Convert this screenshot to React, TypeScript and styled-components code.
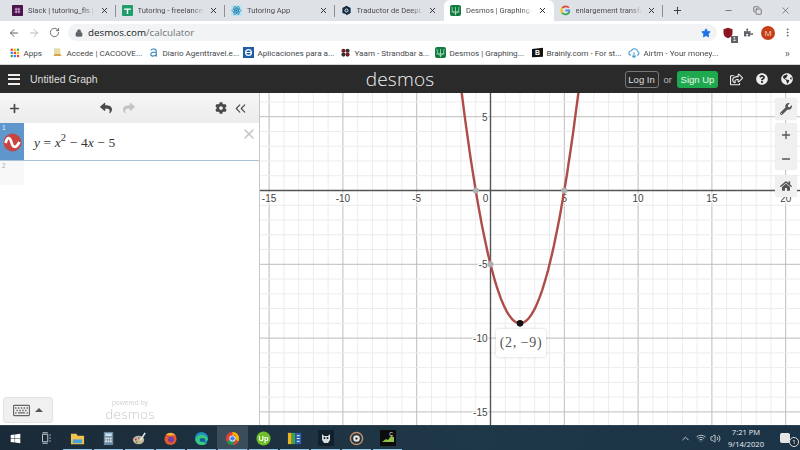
import React from "react";
import styled, { createGlobalStyle } from "styled-components";
import { ArrowLeft, ArrowRight, RotateCw, Lock, Star, MoreVertical, X, Plus, Minus, Square, Copy, ChevronUp, ChevronsLeft, Volume2, Wifi } from "lucide-react";
import { FaCog, FaGlobeAmericas, FaHome, FaPuzzlePiece, FaQuestionCircle, FaRegShareSquare, FaReply, FaShare, FaWindows, FaWrench, FaRegKeyboard } from "react-icons/fa";

const Global = createGlobalStyle`
  html, body { margin: 0; padding: 0; width: 800px; height: 450px; overflow: hidden; background: #fff; }
  #root { width: 800px; height: 450px; }
  * { box-sizing: border-box; }
`;

const Page = styled.div`
  width: 800px; height: 450px; display: flex; flex-direction: column; overflow: hidden;
  font-family: "Open Sans", "Liberation Sans", sans-serif; filter: blur(0.35px);
`;
const TabStrip = styled.div`
  height: 21px; background: #dee1e6; display: flex; align-items: stretch; padding-left: 6px; flex: none;
`;
const Tab = styled.div<{ $active?: boolean; $sep?: boolean }>`
  width: 109.5px; flex: none; display: flex; align-items: center; padding: 0 5px 0 6px; gap: 5px; position: relative;
  background: ${p => (p.$active ? "#ffffff" : "transparent")};
  border-radius: ${p => (p.$active ? "6px 6px 0 0" : "0")};
  &::after {
    content: ""; position: absolute; right: 0; top: 5px; bottom: 4px; width: 1px;
    background: ${p => (p.$sep ? "#8b8e93" : "transparent")};
  }
`;
const TabLabel = styled.span`
  flex: 1; min-width: 0; overflow: hidden; white-space: nowrap; font-family: Roboto, sans-serif; font-size: 7.6px; color: #4a4c50; line-height: 21px;
  -webkit-mask-image: linear-gradient(to right, #000 82%, transparent 100%);
  mask-image: linear-gradient(to right, #000 82%, transparent 100%);
`;
const TabClose = styled.span`
  display: flex; color: #333; margin-right: 2px; flex: none;
`;
const NewTab = styled.div`
  width: 28px; display: flex; align-items: center; justify-content: center; color: #3c4043; flex: none;
`;
const WindowControls = styled.div`
  margin-left: auto; display: flex; align-items: center; color: #555;
`;
const WindowBtn = styled.div`
  width: 28.5px; display: flex; justify-content: center;
`;
const Toolbar = styled.div`
  height: 20px; background: #fff; display: flex; align-items: center; flex: none; padding-left: 4px; padding-top: 3px;
`;
const NavBtn = styled.div<{ $dim?: boolean }>`
  width: 20px; display: flex; justify-content: center; color: ${p => (p.$dim ? "#b8babd" : "#5f6368")};
`;
const Omnibox = styled.div`
  margin-left: 4px; width: 649px; height: 17px; border-radius: 9px; background: #f1f3f4; display: flex; align-items: center; padding: 0 6px 0 7px;
`;
const Url = styled.span`
  margin-left: 5px; font-size: 9.8px; color: #202124; flex: 1; white-space: nowrap;
  & > em { font-style: normal; color: #70757a; }
`;
const ExtSlot = styled.div<{ $w: number }>`
  width: ${p => p.$w}px; display: flex; justify-content: center; align-items: center; flex: none; position: relative; color: #5f6368;
`;
const ExtBadge = styled.span`
  position: absolute; right: 1px; bottom: -4px; width: 7px; height: 7px; background: #5f6368; color: #fff; font-size: 6px; line-height: 7px; text-align: center; font-family: "Liberation Sans", sans-serif;
`;
const Avatar = styled.span`
  width: 14px; height: 14px; border-radius: 50%; background: #c5401a; color: #f6d9cc; font-size: 8px; line-height: 14px; text-align: center;
`;
const Bookmarks = styled.div`
  height: 24px; background: #fff; display: flex; align-items: center; padding-left: 10px; flex: none; border-bottom: 1px solid #d5d6d8;
`;
const Bookmark = styled.div<{ $w: number }>`
  width: ${p => p.$w}px; flex: none; display: flex; align-items: center; gap: 3.5px; font-family: Roboto, sans-serif; font-size: 8.1px; color: #45474a; white-space: nowrap;
`;
const MoreBookmarks = styled.span`
  margin-left: 14px; color: #666; font-size: 10px;
`;
const Header = styled.header`
  height: 28px; background: #2a2a2a; color: #e6e6e6; display: flex; align-items: center; flex: none; position: relative; padding-left: 8px;
`;
const Burger = styled.div`
  width: 12px; height: 11px; display: flex; flex-direction: column; justify-content: space-between;
  & > i { display: block; height: 2px; background: #eee; }
`;
const Title = styled.span`
  margin-left: 10px; font-family: "Liberation Sans", sans-serif; font-size: 10.5px; color: #ddd;
`;
const Logo = styled.span`
  position: absolute; left: 0; right: 0; text-align: center; font-family: "Open Sans", sans-serif; font-weight: 300; font-size: 19px; letter-spacing: 0.2px; color: #f2f2f2; line-height: 28px;
`;
const HeaderRight = styled.div`
  margin-left: auto; display: flex; align-items: center; font-family: "Liberation Sans", sans-serif; font-size: 9.5px; position: relative; padding-right: 7px;
`;
const LoginBtn = styled.span`
  width: 34px; height: 17px; border: 1px solid #777; border-radius: 3px; text-align: center; line-height: 15px; color: #ddd;
`;
const OrText = styled.span`
  margin: 0 5px; color: #bbb;
`;
const SignUp = styled.span`
  width: 41px; height: 17px; background: #1fa94f; border-radius: 3px; text-align: center; line-height: 17px; color: #e9f7ec;
`;
const HeadIcon = styled.span<{ $ml: number }>`
  margin-left: ${p => p.$ml}px; display: flex; color: #eee;
`;
const Main = styled.main`
  flex: 1; min-height: 0; display: flex;
`;
const Panel = styled.aside`
  width: 260px; flex: none; display: flex; flex-direction: column; border-right: 1px solid #c7c7c7; background: #fff; box-shadow: 1px 0 2px rgba(0,0,0,.05);
`;
const PanelTools = styled.div`
  height: 30px; background: linear-gradient(#f6f6f6, #ececec); display: flex; align-items: center; flex: none; color: #444; padding-left: 8px;
`;
const ToolBtn = styled.span<{ $ml?: number; $dim?: boolean }>`
  display: flex; margin-left: ${p => p.$ml ?? 0}px; color: ${p => (p.$dim ? "#c4c4c4" : "#4a4a4a")};
`;
const ExprRow = styled.div`
  height: 38px; display: flex; flex: none; border-bottom: 1px solid #a9c3da; position: relative; background: #fff;
`;
const ExprCell = styled.div`
  width: 24px; background: #5f97cd; position: relative; display: flex; align-items: center; justify-content: center; padding-top: 2px;
`;
const RowNum = styled.span<{ $c: string }>`
  position: absolute; left: 2px; top: 1px; font-size: 6.5px; color: ${p => p.$c}; font-family: "Liberation Sans", sans-serif;
`;
const Formula = styled.div`
  margin-left: 10px; align-self: center; font-family: "Liberation Serif", serif; font-size: 13.5px; color: #333; white-space: nowrap; padding-top: 3px; letter-spacing: .1px;
  & > i { font-style: italic; }
  & > sup { font-size: 10.5px; line-height: 0; vertical-align: 6px; }
`;
const ExprClose = styled.span`
  position: absolute; right: 2px; top: 3px; display: flex; color: #c5c5c5;
`;
const EmptyRow = styled.div`
  height: 24px; display: flex; flex: none;
`;
const EmptyCell = styled.div`
  width: 24px; background: #f8f8f8; position: relative;
`;
const PanelFill = styled.div`
  flex: 1;
`;
const PanelFoot = styled.div`
  height: 28px; display: flex; align-items: center; padding: 0 0 2px 3px; flex: none; position: relative;
`;
const KeyboardBtn = styled.div`
  width: 50px; height: 26px; background: #f0f0f0; border: 1px solid #e2e2e2; border-radius: 3px; display: flex; align-items: center; padding-left: 9px; gap: 5px; color: #666;
`;
const Caret = styled.span`
  width: 0; height: 0; border: 4px solid transparent; border-top: 0; border-bottom: 4px solid #555;
`;
const Powered = styled.div`
  margin-left: 52px; width: 50px; display: flex; flex-direction: column; align-items: center; color: #d2d2d2;
`;
const PoweredBy = styled.span`
  font-size: 7px; line-height: 8px; font-family: "Liberation Sans", sans-serif;
`;
const PoweredLogo = styled.span`
  font-size: 13.5px; line-height: 14px; font-weight: 300; letter-spacing: .3px; color: #c8c8c8;
`;
const Graph = styled.section`
  flex: 1; min-width: 0; position: relative; background: #fff; overflow: hidden;
`;
const PointLabel = styled.div`
  position: absolute; left: 236px; top: 236px; width: 50px; height: 28px; background: #fff; border-radius: 3px; box-shadow: 0 0 3px rgba(0,0,0,.2);
  font-family: "Liberation Serif", serif; font-size: 14px; color: #555; display: flex; align-items: center; justify-content: center; letter-spacing: .6px;
`;
const GraphTools = styled.div`
  position: absolute; right: 3px; top: 5px; display: flex; flex-direction: column; width: 22px;
`;
const GraphBtn = styled.div<{ $h: number; $mb?: number }>`
  height: ${p => p.$h}px; margin-bottom: ${p => p.$mb ?? 0}px; background: #f0f0f0; border-radius: 3px; display: flex; align-items: center; justify-content: center; color: #555; box-shadow: 0 0 1px rgba(0,0,0,.15);
`;
const Stack = styled.div`
  display: flex; flex-direction: column; gap: 12px; align-items: center;
`;
const Taskbar = styled.footer`
  height: 25px; flex: none; background: linear-gradient(90deg, #1b2a38, #1f3848 60%, #1b3346); display: flex; align-items: stretch; color: #fff; border-top: 1px solid #2d4150;
`;
const TaskCell = styled.div<{ $active?: boolean; $run?: boolean }>`
  width: 31px; flex: none; display: flex; align-items: center; justify-content: center; position: relative;
  background: ${p => (p.$active ? "#3b4d5a" : "transparent")};
  &::after {
    content: ""; position: absolute; left: 1px; right: 1px; bottom: 0; height: 1.5px;
    background: ${p => (p.$run ? "#8fc4ea" : "transparent")};
  }
`;
const Tray = styled.div`
  margin-left: auto; display: flex; align-items: center; color: #cfd6db;
`;
const TraySlot = styled.span<{ $w: number }>`
  width: ${p => p.$w}px; display: flex; justify-content: center; position: relative;
`;
const Clock = styled.div`
  width: 48px; display: flex; flex-direction: column; align-items: center; font-size: 7.6px; line-height: 12px; color: #e8edf0;
`;
const NotifBadge = styled.span`
  position: absolute; right: 1px; bottom: -3px; width: 10px; height: 10px; border-radius: 50%; background: #1c2c38; border: 1px solid #ddd; font-size: 6px; line-height: 8px; text-align: center; color: #fff;
`;

const Ico = ({ s = 11, children }: { s?: number; children: React.ReactNode }) => (
  <svg width={s} height={s} viewBox="0 0 16 16" style={{ flex: "none", display: "block" }}>{children}</svg>
);
const SlackIco = () => <Ico><rect width="16" height="16" rx="1" fill="#4a154b" /><path d="M4 6h8M4 10h8M6 4v8M10 4v8" stroke="#d7a6d9" strokeWidth="1.4" /></Ico>;
const SheetsIco = () => <Ico><rect width="16" height="16" rx="1.5" fill="#1f9d6a" /><path d="M3 6h10M8 6v7" stroke="#fff" strokeWidth="2" /></Ico>;
const ReactIco = () => <Ico><rect width="16" height="16" rx="2" fill="#b9e3f2" /><g fill="none" stroke="#1277a8" strokeWidth="1"><ellipse cx="8" cy="8" rx="6.5" ry="2.5" /><ellipse cx="8" cy="8" rx="6.5" ry="2.5" transform="rotate(60 8 8)" /><ellipse cx="8" cy="8" rx="6.5" ry="2.5" transform="rotate(120 8 8)" /></g><circle cx="8" cy="8" r="1.3" fill="#1277a8" /></Ico>;
const DeepLIco = () => <Ico><path d="M8 1l6 3.5v7L8 15l-1-2-5-1.500v-7z" fill="#0f2b46" /><circle cx="8" cy="8" r="2.200" fill="none" stroke="#fff" strokeWidth="1.300" /></Ico>;
const DesmosIco = () => <Ico><rect width="16" height="16" rx="3" fill="#127a3e" /><path d="M3 3c0 8 3 9 5 9s5-1 5-9M8 3v12M2 10h12" stroke="#b9e7c8" strokeWidth="1.100" fill="none" /></Ico>;
const GoogleIco = () => <Ico><path d="M14.500 8H8" stroke="#4285f4" strokeWidth="2.600" /><path d="M13 4A6.300 6.300 0 0 0 3.200 4.500" stroke="#ea4335" strokeWidth="2.600" fill="none" /><path d="M3.200 4.500a6.300 6.300 0 0 0 0 7" stroke="#fbbc05" strokeWidth="2.600" fill="none" /><path d="M3.200 11.500A6.300 6.300 0 0 0 14 9" stroke="#34a853" strokeWidth="2.600" fill="none" /></Ico>;
const AppsIco = () => <Ico s={10}>{["#ea4335", "#fbbc05", "#34a853", "#4285f4", "#ea4335", "#fbbc05", "#34a853", "#4285f4", "#ea4335"].map((c, i) => <rect key={i} x={1 + (i % 3) * 5} y={1 + Math.floor(i / 3) * 5} width="3.600" height="3.600" fill={c} />)}</Ico>;
const AccedeIco = () => <Ico><rect x="3" y="2" width="9" height="9" fill="#e8d9a8" /><path d="M2 13h12l-2-3H4z" fill="#d9a24a" /></Ico>;
const DiarioIco = () => <Ico><path d="M4 5c1-3 8-3 8 1v8M12 8c-3-1-8-.5-8 3 0 3 6 3 8 0" stroke="#2c7fb8" strokeWidth="1.500" fill="none" /></Ico>;
const IeIco = () => <Ico><rect width="16" height="16" fill="#1f5da8" /><circle cx="8" cy="8" r="4.200" fill="none" stroke="#fff" strokeWidth="1.800" /><path d="M4 8h8" stroke="#fff" strokeWidth="1.500" /></Ico>;
const YaamIco = () => <Ico><circle cx="5" cy="5.500" r="3" fill="#7a1a25" /><circle cx="11" cy="5.500" r="3" fill="#333" /><circle cx="5" cy="11" r="3" fill="#333" /><circle cx="11" cy="11" r="3" fill="#7a1a25" /></Ico>;
const BrainlyIco = () => <Ico><path d="M0 3l16-2v13L0 15z" fill="#111" /><text x="8" y="12" fontSize="10" fontWeight="700" fill="#fff" textAnchor="middle" fontFamily="Liberation Sans">B</text></Ico>;
const AirtmIco = () => <Ico s={12}><path d="M4 11a3 3 0 0 1 .500-6A4.500 4.500 0 0 1 13 6a2.600 2.600 0 0 1-1 5" fill="none" stroke="#4e9bd3" strokeWidth="1.500" /><path d="M8 7v7M5.500 11.500L8 14l2.500-2.500" stroke="#4e9bd3" strokeWidth="1.500" fill="none" /></Ico>;
const ShieldIco = () => <Ico s={12}><path d="M8 1l6 2v5c0 4-3 6-6 7-3-1-6-3-6-7V3z" fill="#8c1522" /></Ico>;
const WaveIco = () => <svg width="19" height="19" viewBox="0 0 19 19"><circle cx="9.500" cy="9.500" r="9" fill="#c74440" /><path d="M2.500 10c2-7 4.500-6 6 -.5s4 6.500 8-.500" fill="none" stroke="#fff" strokeWidth="2.800" /></svg>;

const TaskIcons: React.ReactNode[] = [
  <FaWindows size={11} color="#fff" key="w" />,
  <Ico s={12} key="t"><path d="M2 3h7v10H2zM12 3v2M12 7v2M12 11v2M2 1h7M2 15h7" fill="none" stroke="#cdd5da" strokeWidth="1.200" /></Ico>,
  <Ico s={15} key="e"><path d="M1 3h6l1 2h7v9H1z" fill="#f2c14e" /><rect x="3" y="9" width="10" height="4" fill="#4aa3d8" /></Ico>,
  <Ico s={15} key="c"><rect x="3" y="1" width="10" height="14" fill="#6d8aa0" /><rect x="4.500" y="2.500" width="7" height="3" fill="#c9e3f5" />{[0, 1, 2, 3, 4, 5].map(i => <rect key={i} x={4.500 + (i % 3) * 2.500} y={7 + Math.floor(i / 3) * 3} width="1.800" height="2" fill="#e9eef1" />)}</Ico>,
  <Ico s={15} key="p"><ellipse cx="7" cy="9.500" rx="6" ry="4.500" fill="#c8b89a" /><circle cx="4" cy="9" r="1" fill="#d33" /><circle cx="7" cy="7.500" r="1" fill="#39c" /><circle cx="5" cy="12" r="1" fill="#3a5" /><path d="M9 10l5-8" stroke="#eee" strokeWidth="1.600" /></Ico>,
  <Ico s={15} key="f"><circle cx="8" cy="8.500" r="6.500" fill="#e8582c" /><circle cx="8.500" cy="9" r="3.200" fill="#7a3fa0" /><path d="M3 4c3-3 8-3 11 1-2-1-4-1-5 0z" fill="#fbb03b" /></Ico>,
  <Ico s={15} key="d"><circle cx="8" cy="8" r="7" fill="#1d8fc4" /><path d="M1.500 9C3 3 12 2 14.800 8.500c.5 2-4 2.500-6 1.500 2 3 4 3.500 5 3-3 3.500-12 2.500-12.300-4.500z" fill="#39c97e" /><ellipse cx="9" cy="9.500" rx="3" ry="2" fill="#0f5f96" /></Ico>,
  <Ico s={15} key="g"><circle cx="8" cy="8" r="7" fill="#db4437" /><path d="M8 8L1.900 11.500A7 7 0 0 0 8 15l3.500-6z" fill="#0f9d58" /><path d="M8 1a7 7 0 0 1 6.100 10.500L11 8V4.500H8z" fill="#f4b400" /><circle cx="8" cy="8" r="3.300" fill="#fff" /><circle cx="8" cy="8" r="2.500" fill="#4285f4" /></Ico>,
  <Ico s={15} key="u"><circle cx="8" cy="8" r="7.500" fill="#6fbf2a" /><text x="8" y="11" fontSize="8" fontWeight="700" fill="#fff" textAnchor="middle" fontFamily="Liberation Sans">Up</text></Ico>,
  <Ico s={15} key="b"><rect x="1" y="2" width="4" height="12" fill="#e9b520" /><rect x="5" y="2" width="4" height="12" fill="#3fa34d" /><rect x="9" y="2" width="6" height="12" fill="#2a5fb4" /><path d="M10.500 5h3M10.500 8h3M10.500 11h3" stroke="#fff" strokeWidth="1" /></Ico>,
  <Ico s={16} key="h"><rect width="16" height="16" fill="#10202c" /><path d="M4 4l2 2h4l2-2v6l-2 3H6l-2-3z" fill="#d7dcdf" /><circle cx="6.500" cy="8" r="1" fill="#10202c" /><circle cx="9.500" cy="8" r="1" fill="#10202c" /></Ico>,
  <Ico s={15} key="v"><circle cx="8" cy="8" r="6.500" fill="none" stroke="#c58a6a" strokeWidth="1.600" /><circle cx="8" cy="8" r="3.500" fill="#e9e3dc" /><circle cx="8" cy="8" r="1.200" fill="#222" /></Ico>,
  <Ico s={16} key="k"><rect width="16" height="16" fill="#0c0c0c" /><path d="M2 12l4-3 2 1 3-4 3 1v5z" fill="#8fc04a" /><text x="11" y="6" fontSize="5" fill="#fff" textAnchor="middle" fontFamily="Liberation Sans">C</text></Ico>,
];

const tabs = [
  { icon: <SlackIco />, label: "Slack | tutoring_fls | Engineering", sep: true },
  { icon: <SheetsIco />, label: "Tutoring - freelancers sheet", sep: true },
  { icon: <ReactIco />, label: "Tutoring App", sep: true },
  { icon: <DeepLIco />, label: "Traductor de DeepL - Online", sep: false },
  { icon: <DesmosIco />, label: "Desmos | Graphing Calculator", active: true, sep: false },
  { icon: <GoogleIco />, label: "enlargement transformation", sep: true },
];
const marks = [
  { w: 42, icon: <AppsIco />, label: "Apps" },
  { w: 96, icon: <AccedeIco />, label: "Accede | CACOOVE..." },
  { w: 95, icon: <DiarioIco />, label: "Diario Agenttravel.e..." },
  { w: 97, icon: <IeIco />, label: "Aplicaciones para a..." },
  { w: 95, icon: <YaamIco />, label: "Yaam - Strandbar a..." },
  { w: 97, icon: <DesmosIco />, label: "Desmos | Graphing..." },
  { w: 96, icon: <BrainlyIco />, label: "Brainly.com - For st..." },
  { w: 143, icon: <AirtmIco />, label: "Airtm - Your money..." },
];

const OX = 230.5, OY = 97.5, U = 14.76;
const W = 540, H = 332;
const sx = (x: number) => OX + x * U;
const sy = (y: number) => OY - y * U;
const range = (a: number, b: number) => Array.from({ length: b - a + 1 }, (_, i) => a + i);
const curve = range(-60, 100).map(i => {
  const x = i / 10;
  return `${sx(x).toFixed(1)},${sy(x * x - 4 * x - 5).toFixed(1)}`;
}).join(" ");

const axisText = { fontFamily: "Liberation Sans, sans-serif", fontSize: 10, fill: "#444", stroke: "#fff", strokeWidth: 2.5, paintOrder: "stroke" } as React.CSSProperties;

const GraphSvg = () => (
  <svg width={W} height={H} viewBox={`0 0 ${W} ${H}`} style={{ display: "block" }}>
    {range(-16, 21).map(x => <line key={x} x1={sx(x)} x2={sx(x)} y1={0} y2={H} stroke={x % 5 === 0 ? "#bdbdbd" : "#ececec"} />)}
    {range(-16, 7).map(y => <line key={y} y1={sy(y)} y2={sy(y)} x1={0} x2={W} stroke={y % 5 === 0 ? "#bdbdbd" : "#ececec"} />)}
    <line x1={OX} x2={OX} y1={0} y2={H} stroke="#555" strokeWidth="1.400" />
    <line y1={OY} y2={OY} x1={0} x2={W} stroke="#555" strokeWidth="1.400" />
    {[-15, -10, -5, 5, 10, 15, 20].map(x => <text key={x} x={sx(x)} y={OY + 11} textAnchor="middle" style={axisText}>{x < 0 ? `-${-x}` : x}</text>)}
    <text x={OX - 5} y={OY + 11} textAnchor="middle" style={axisText}>0</text>
    {[5, -5, -10, -15].map(y => <text key={y} x={OX - 3} y={sy(y) + 4} textAnchor="end" style={axisText}>{y < 0 ? `-${-y}` : y}</text>)}
    <polyline points={curve} fill="none" stroke="#ad4c48" strokeWidth="2.400" />
    {[[-1, 0], [5, 0], [0, -5]].map(([x, y]) => <circle key={x} cx={sx(x)} cy={sy(y)} r="3" fill="#b0b0b0" />)}
    <circle cx={sx(2)} cy={sy(-9)} r="3.300" fill="#111" />
  </svg>
);

export default function App() {
  return (
    <Page>
      <Global />
      <TabStrip>
        {tabs.map(t => (
          <Tab key={t.label} $active={t.active} $sep={t.sep}>
            {t.icon}
            <TabLabel>{t.label}</TabLabel>
            <TabClose><X size={9} strokeWidth={2.600} /></TabClose>
          </Tab>
        ))}
        <NewTab><Plus size={11} strokeWidth={2.200} /></NewTab>
        <WindowControls>
          <WindowBtn><Minus size={9} /></WindowBtn>
          <WindowBtn><Copy size={9} /></WindowBtn>
          <WindowBtn><X size={11} strokeWidth={1.400} /></WindowBtn>
        </WindowControls>
      </TabStrip>
      <Toolbar>
        <NavBtn><ArrowLeft size={12} /></NavBtn>
        <NavBtn $dim><ArrowRight size={12} /></NavBtn>
        <NavBtn><RotateCw size={11} /></NavBtn>
        <Omnibox>
          <Lock size={8} fill="#5f6368" color="#5f6368" />
          <Url>desmos.com<em>/calculator</em></Url>
          <Star size={10} fill="#1a73e8" color="#1a73e8" />
        </Omnibox>
        <ExtSlot $w={22}><ShieldIco /><ExtBadge>1</ExtBadge></ExtSlot>
        <ExtSlot $w={18}><FaPuzzlePiece size={9} /></ExtSlot>
        <ExtSlot $w={22}><Avatar>M</Avatar></ExtSlot>
        <ExtSlot $w={16}><MoreVertical size={11} /></ExtSlot>
      </Toolbar>
      <Bookmarks>
        {marks.map(m => <Bookmark key={m.label} $w={m.w}>{m.icon}<span>{m.label}</span></Bookmark>)}
        <MoreBookmarks>»</MoreBookmarks>
      </Bookmarks>
      <Header>
        <Burger><i /><i /><i /></Burger>
        <Title>Untitled Graph</Title>
        <Logo>desmos</Logo>
        <HeaderRight>
          <LoginBtn>Log In</LoginBtn>
          <OrText>or</OrText>
          <SignUp>Sign Up</SignUp>
          <HeadIcon $ml={12}><FaRegShareSquare size={13} /></HeadIcon>
          <HeadIcon $ml={13}><FaQuestionCircle size={12} /></HeadIcon>
          <HeadIcon $ml={13}><FaGlobeAmericas size={12} /></HeadIcon>
        </HeaderRight>
      </Header>
      <Main>
        <Panel>
          <PanelTools>
            <ToolBtn><Plus size={13} strokeWidth={3.200} /></ToolBtn>
            <ToolBtn $ml={79}><FaReply size={12} /></ToolBtn>
            <ToolBtn $ml={11} $dim><FaShare size={12} /></ToolBtn>
            <ToolBtn $ml={80}><FaCog size={12} /></ToolBtn>
            <ToolBtn $ml={5}><ChevronsLeft size={17} strokeWidth={1.600} /></ToolBtn>
          </PanelTools>
          <ExprRow>
            <ExprCell><RowNum $c="#e8f1f9">1</RowNum><WaveIco /></ExprCell>
            <Formula>
              <i>y</i> = <i>x</i><sup>2</sup> − 4<i>x</i> − 5
            </Formula>
            <ExprClose><X size={16} strokeWidth={2.400} /></ExprClose>
          </ExprRow>
          <EmptyRow><EmptyCell><RowNum $c="#aaa">2</RowNum></EmptyCell></EmptyRow>
          <PanelFill />
          <PanelFoot>
            <KeyboardBtn><FaRegKeyboard size={17} /><Caret /></KeyboardBtn>
            <Powered><PoweredBy>powered by</PoweredBy><PoweredLogo>desmos</PoweredLogo></Powered>
          </PanelFoot>
        </Panel>
        <Graph>
          <GraphSvg />
          <PointLabel>(2, −9)</PointLabel>
          <GraphTools>
            <GraphBtn $h={22} $mb={3}><FaWrench size={12} /></GraphBtn>
            <GraphBtn $h={47} $mb={5}>
              <Stack><Plus size={12} strokeWidth={2.600} /><Minus size={12} strokeWidth={2.600} /></Stack>
            </GraphBtn>
            <GraphBtn $h={22}><FaHome size={12} /></GraphBtn>
          </GraphTools>
        </Graph>
      </Main>
      <Taskbar>
        {TaskIcons.map((ic, i) => (
          <TaskCell key={i} $active={i === 7} $run={i >= 2}>{ic}</TaskCell>
        ))}
        <Tray>
          <TraySlot $w={18}><ChevronUp size={11} /></TraySlot>
          <TraySlot $w={14}><Wifi size={10} /></TraySlot>
          <TraySlot $w={14}><Volume2 size={11} /></TraySlot>
          <Clock><span>7:21 PM</span><span>9/14/2020</span></Clock>
          <TraySlot $w={30}><Square size={12} fill="#e6e6e6" color="#e6e6e6" /><NotifBadge>1</NotifBadge></TraySlot>
        </Tray>
      </Taskbar>
    </Page>
  );
}
